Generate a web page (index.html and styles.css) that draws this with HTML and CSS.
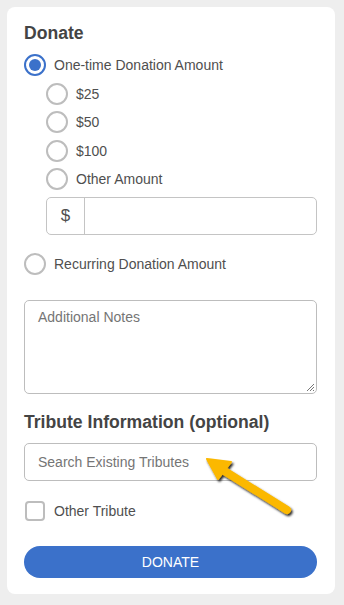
FILE: index.html
```html
<!DOCTYPE html>
<html>
<head>
<meta charset="utf-8">
<link rel="stylesheet" href="styles.css">
</head>
<body>
<div class="card">
  <h2 class="title">Donate</h2>
  <label class="radio-row first">
    <span class="radio checked"></span>
    <span class="label">One-time Donation Amount</span>
  </label>
  <div class="sub">
    <label class="radio-row"><span class="radio"></span><span class="label">$25</span></label>
    <label class="radio-row"><span class="radio"></span><span class="label">$50</span></label>
    <label class="radio-row"><span class="radio"></span><span class="label">$100</span></label>
    <label class="radio-row"><span class="radio"></span><span class="label">Other Amount</span></label>
    <div class="input-group">
      <span class="addon">$</span>
      <span class="field"></span>
    </div>
  </div>
  <label class="radio-row recurring">
    <span class="radio"></span>
    <span class="label">Recurring Donation Amount</span>
  </label>
  <div class="textarea">
    <span class="placeholder">Additional Notes</span>
    <svg class="grip" width="10" height="10" viewBox="0 0 10 10"><path d="M9 2 L2 9 M9 5 L5 9 M9 8 L8 9" stroke="#777" stroke-width="1" fill="none"/></svg>
  </div>
  <h2 class="title tribute">Tribute Information (optional)</h2>
  <div class="search"><span class="placeholder">Search Existing Tributes</span></div>
  <label class="check-row">
    <span class="checkbox"></span>
    <span class="label">Other Tribute</span>
  </label>
  <button class="btn">DONATE</button>
  <svg class="arrow" width="344" height="605" viewBox="0 0 344 605">
    <defs>
      <filter id="sh" x="-20%" y="-20%" width="140%" height="140%">
        <feDropShadow dx="1.5" dy="2" stdDeviation="1.2" flood-color="#000" flood-opacity="0.85"/>
      </filter>
    </defs>
    <g filter="url(#sh)">
      <line x1="218" y1="467" x2="287" y2="510" stroke="#fbb800" stroke-width="8" stroke-linecap="round"/>
      <polygon points="207,459 231,462 218,479" fill="#fbb800" stroke="#fbb800" stroke-width="2" stroke-linejoin="round"/>
    </g>
  </svg>
</div>
</body>
</html>
```
FILE: styles.css
```css
html, body {
  margin: 0;
  padding: 0;
}
body {
  background: #eeeeee;
  font-family: "Liberation Sans", Arial, sans-serif;
  color: #4f4f4f;
  width: 344px;
  height: 605px;
  overflow: hidden;
}
.card {
  position: relative;
  box-sizing: border-box;
  margin: 7px 9px 0 7px;
  width: 328px;
  height: 587px;
  background: #fff;
  border-radius: 8px;
  padding: 15px 18px 16px 17px;
  display: flex;
  flex-direction: column;
}
.title {
  margin: 0;
  font-size: 17.6px;
  font-weight: bold;
  line-height: 22px;
  color: #444;
}
.radio-row {
  display: flex;
  align-items: center;
  height: 28.5px;
}
.radio-row.first {
  margin-top: 7px;
}
.radio {
  box-sizing: border-box;
  width: 22px;
  height: 22px;
  border: 2px solid #bdbdbd;
  border-radius: 50%;
  flex: none;
  position: relative;
}
.radio.checked {
  border-color: #3b71ca;
}
.radio.checked::after {
  content: "";
  position: absolute;
  left: 3px;
  top: 3px;
  width: 12px;
  height: 12px;
  border-radius: 50%;
  background: #3b71ca;
}
.label {
  margin-left: 8px;
  font-size: 14px;
  color: #4f4f4f;
}
.sub {
  padding-left: 22px;
  display: flex;
  flex-direction: column;
}
.input-group {
  margin-top: 4px;
  display: flex;
  height: 38px;
  box-sizing: border-box;
  border: 1px solid #c4c4c4;
  border-radius: 5px;
}
.addon {
  width: 37px;
  border-right: 1px solid #c4c4c4;
  display: flex;
  align-items: center;
  justify-content: center;
  font-size: 17px;
  color: #4f4f4f;
}
.field { flex: 1; }
.recurring {
  margin-top: 14px;
}
.textarea {
  position: relative;
  margin-top: 22px;
  height: 95px;
  box-sizing: border-box;
  border: 1px solid #bdbdbd;
  border-radius: 5px;
  padding: 7px 13px;
}
.placeholder {
  font-size: 14px;
  color: #757575;
  line-height: 17px;
}
.grip {
  position: absolute;
  right: 1px;
  bottom: 1px;
}
.tribute {
  margin-top: 17px;
}
.search {
  margin-top: 10px;
  height: 38px;
  box-sizing: border-box;
  border: 1px solid #bdbdbd;
  border-radius: 5px;
  padding: 0 13px;
  display: flex;
  align-items: center;
}
.check-row {
  margin-top: 16px;
  display: flex;
  align-items: center;
  height: 28px;
}
.checkbox {
  box-sizing: border-box;
  width: 20px;
  height: 20px;
  border: 2px solid #bdbdbd;
  border-radius: 4px;
  margin-left: 1px;
  margin-right: 1px;
}
.btn {
  margin-top: 21px;
  height: 32px;
  border: none;
  border-radius: 16px;
  background: #3b71ca;
  color: #fff;
  font-family: "Liberation Sans", Arial, sans-serif;
  font-size: 14px;
  padding: 0;
}
.arrow {
  position: absolute;
  left: -7px;
  top: -7px;
  pointer-events: none;
}
```
